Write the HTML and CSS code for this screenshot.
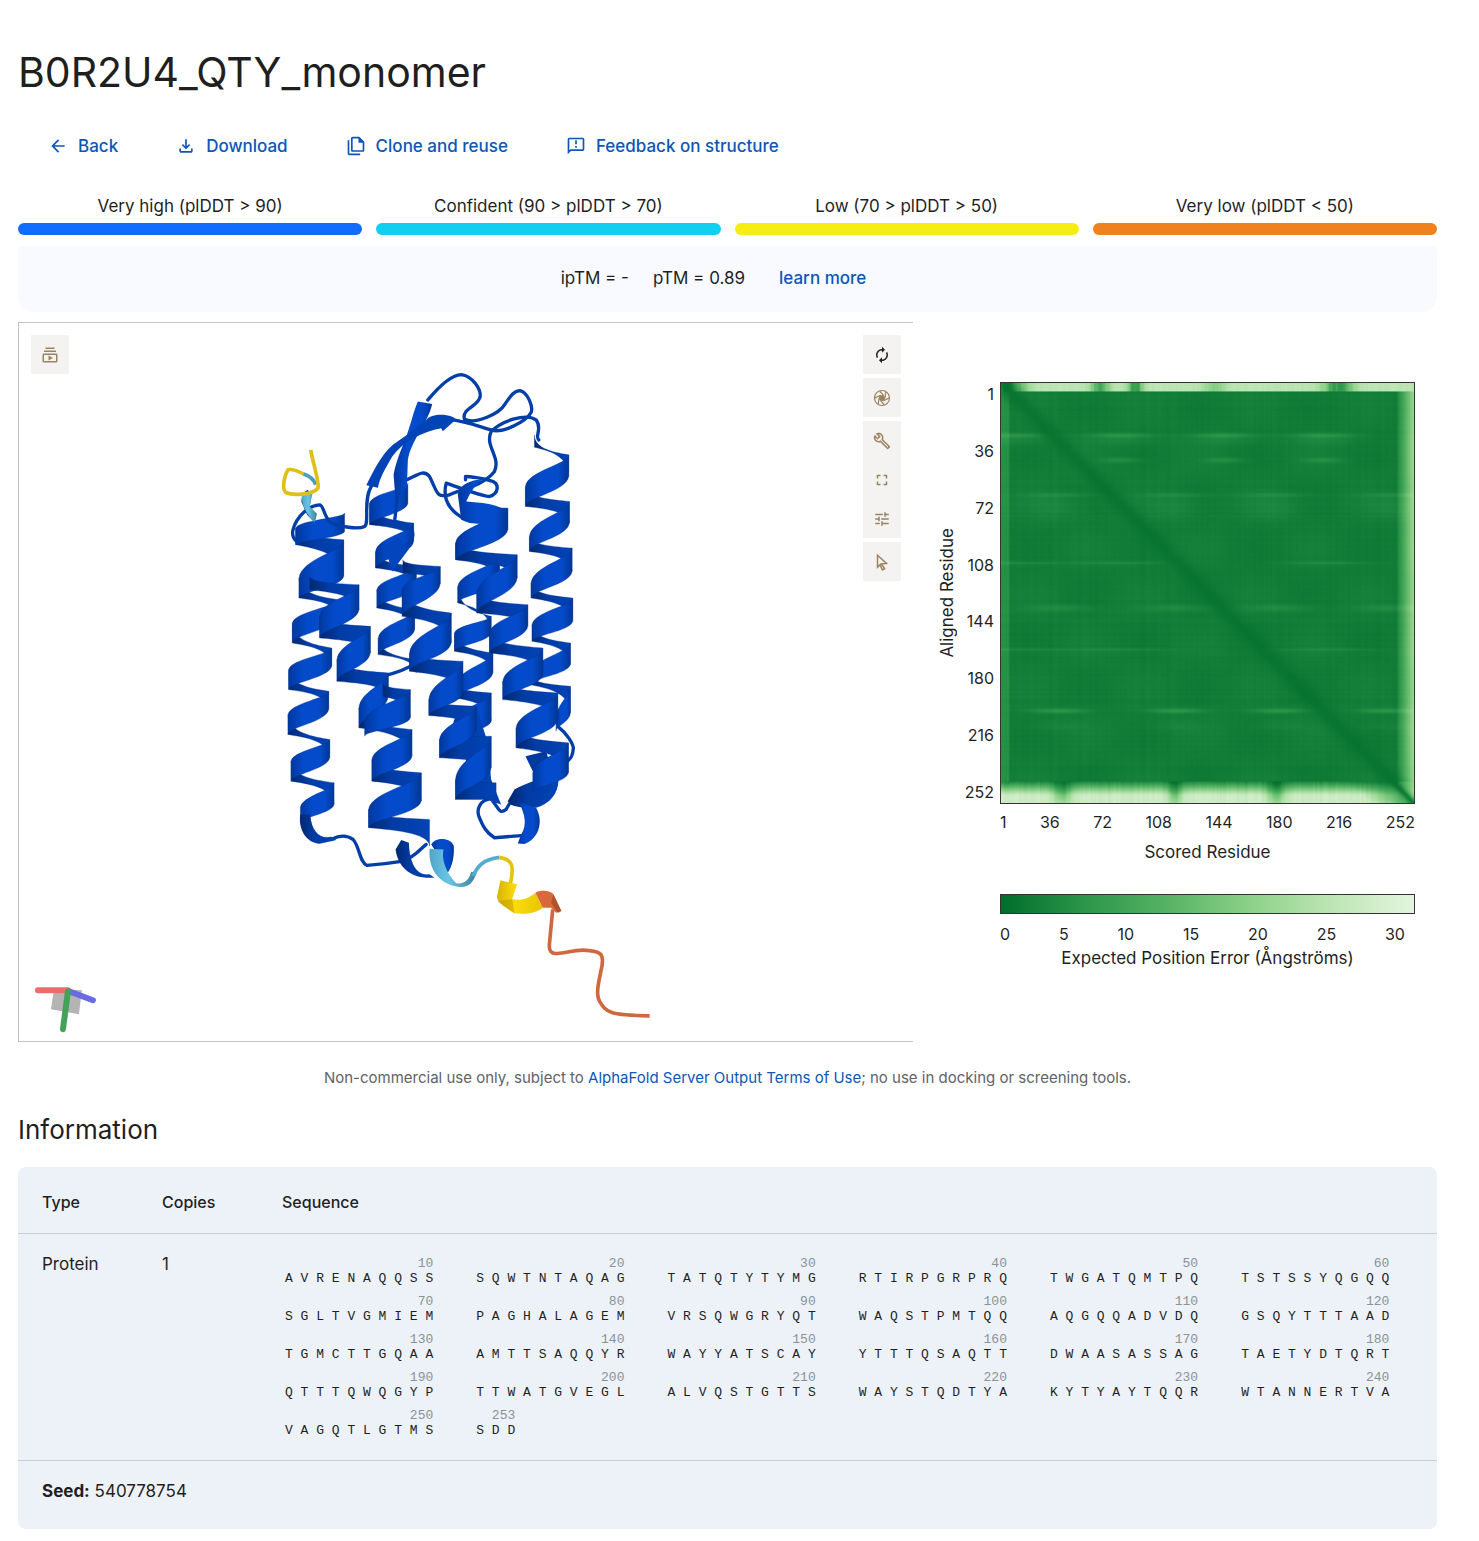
FILE: index.html
```html
<!DOCTYPE html>
<html lang="en">
<head>
<meta charset="utf-8">
<title>B0R2U4_QTY_monomer</title>
<meta name="viewport" content="width=device-width, initial-scale=1">
<link rel="stylesheet" href="styles.css">
</head>
<body>
<main class="page">
  <h1 class="title">B0R2U4_QTY_monomer</h1>

  <nav class="actions" aria-label="Job actions">
    <button class="action" type="button"><svg class="icon" viewBox="0 0 24 24"><path d="M7.8 13l5.6 5.6L12 20l-8-8 8-8 1.4 1.4L7.800 11H20v2z"/></svg>Back</button>
    <button class="action" type="button"><svg class="icon" viewBox="0 0 24 24"><path d="M12 16l-5-5 1.4-1.45 2.6 2.6V4h2v8.15l2.6-2.6L17 11zM6 20q-.8 0-1.4-.6T4 18v-3h2v3h12v-3h2v3q0 .8-.6 1.4T18 20z"/></svg>Download</button>
    <button class="action" type="button"><svg class="icon" viewBox="0 0 24 24"><path fill-rule="evenodd" d="M8 1C6.900 1 6 1.900 6 3v14c0 1.100.9 2 2 2h12c1.100 0 2-.9 2-2V7l-6-6zM8 3h7v5h5v9H8zM2 5h2v16h13v2H4c-1.100 0-2-.9-2-2z"/></svg>Clone and reuse</button>
    <button class="action" type="button"><svg class="icon" viewBox="0 0 24 24"><path d="M20 2H4c-1.1 0-2 .9-2 2v18l4-4h14c1.1 0 2-.9 2-2V4c0-1.1-.9-2-2-2zm0 14H5.2L4 17.2V4h16v12zM11 5h2v5h-2zm0 7h2v2h-2z"/></svg>Feedback on structure</button>
  </nav>

  <ul class="legend">
    <li class="legend-item">Very high (plDDT &gt; 90)<span class="bar bar-very-high"></span></li>
    <li class="legend-item">Confident (90 &gt; plDDT &gt; 70)<span class="bar bar-confident"></span></li>
    <li class="legend-item">Low (70 &gt; plDDT &gt; 50)<span class="bar bar-low"></span></li>
    <li class="legend-item">Very low (plDDT &lt; 50)<span class="bar bar-very-low"></span></li>
  </ul>

  <div class="scores">
    <span>ipTM = -</span>
    <span>pTM = 0.89</span>
    <a class="learn" href="#">learn more</a>
  </div>

  <section class="results">
    <div class="viewer">
      <svg class="structure" viewBox="0 0 895 719" role="img" aria-label="Predicted structure">
        <defs>
          <linearGradient id="front"><stop offset="0" stop-color="#01389f"/><stop offset=".35" stop-color="#034bcb"/><stop offset=".75" stop-color="#034bcb"/><stop offset="1" stop-color="#013795"/></linearGradient>
          <linearGradient id="back"><stop offset="0" stop-color="#01286f"/><stop offset=".4" stop-color="#023ca5"/><stop offset="1" stop-color="#0243b6"/></linearGradient>
          <linearGradient id="cyan"><stop offset="0" stop-color="#4fa6c8"/><stop offset=".4" stop-color="#6cc4e4"/><stop offset="1" stop-color="#3c819c"/></linearGradient>
          <linearGradient id="gold"><stop offset="0" stop-color="#d8b400"/><stop offset=".4" stop-color="#fbdb0c"/><stop offset="1" stop-color="#e8c400"/></linearGradient>
        </defs>
        <g transform="translate(251 37) scale(.33333)">
          <g id="helices-rear"></g>
          <g class="coil">
            <path d="M475 120C500 90 540 45 575 44C610 48 635 90 632 110C628 140 575 145 585 178C620 195 690 160 705 135C725 105 735 92 752 92C775 98 792 140 785 158C770 185 700 222 665 210C630 200 590 185 550 180"/>
            <path d="M808 240C795 230 820 205 800 180C770 160 700 180 665 215C645 260 695 290 675 335C640 380 570 390 540 405C500 415 505 400 480 350C460 325 440 350 400 365"/>
            <path d="M590 480C530 450 520 410 530 370C560 380 640 410 660 410C690 400 690 370 665 363C640 355 600 350 588 350V360"/>
            <path d="M305 380C280 420 300 490 285 500C265 510 210 500 185 490C160 470 165 440 150 435C120 435 80 470 70 510C65 530 75 540 85 550"/>
            <path d="M385 400L375 485C400 490 430 500 430 525C430 540 420 550 405 560"/>
            <path d="M345 948C380 940 410 930 440 910"/>
            <path d="M870 1105C890 1120 910 1150 912 1165C910 1190 905 1195 895 1205"/>
            <path d="M655 1320C635 1325 620 1345 628 1370C640 1400 650 1420 675 1435L765 1428"/>
            <path d="M670 1325C690 1350 690 1365 710 1350C720 1330 740 1300 790 1290"/>
            <path d="M185 1440C205 1430 230 1425 250 1440C270 1460 270 1510 292 1518C330 1515 370 1510 400 1505C440 1490 450 1470 470 1455"/>
          </g>
          <path fill="url(#back)" d="M92 1365C85 1410 110 1450 150 1453L200 1442L185 1432C150 1440 125 1415 122 1365Z"/>
          <path fill="url(#back)" d="M735 1290C770 1270 840 1250 865 1240C875 1290 850 1330 800 1345C750 1345 720 1340 715 1325Z"/>
          <path fill="url(#front)" d="M750 1330L800 1345C825 1390 805 1440 765 1454L745 1452L755 1425C775 1395 765 1365 750 1330Z"/>
          <path fill="url(#back)" d="M378 1470C385 1520 420 1560 495 1555L480 1545C440 1550 420 1510 418 1450L395 1442Z"/>
          <path fill="url(#front)" d="M485 1455C500 1430 545 1435 553 1460C555 1500 545 1535 525 1550L515 1500Z"/>
          <path fill="#013a9e" d="M768 1190L830 1175L850 1240L790 1235Z"/>
          <path fill="#0242b2" d="M585 1060L620 1040L655 1150L665 1260L695 1335L620 1310L590 1230Z"/>
          <g id="helices-front"></g>
          <path fill="#0245bd" d="M345 560L385 532L418 568L368 635Z"/>
          <path fill="url(#front)" d="M565 405C570 370 610 360 640 358C610 380 600 405 590 425C640 430 680 430 712 455L715 500L600 490L575 480Z"/>
          <path fill="url(#front)" d="M445 125L488 132C475 190 425 240 415 300L412 380L378 420L372 345C382 290 405 250 412 225C425 190 430 160 445 125Z"/>
          <path fill="#0243b6" d="M470 180C485 160 540 160 560 178L520 214L515 205C460 215 400 245 368 290C345 330 330 355 325 384L290 376C310 340 330 290 370 255C410 225 450 200 470 180Z"/>
          <path fill="url(#back)" d="M115 390L125 410L120 440L140 465L135 488L112 465L95 425L98 400Z"/>
          <path fill="url(#cyan)" d="M98 405L130 395L120 440L142 462L135 488C115 470 90 430 98 405Z"/>
          <path class="tube" stroke="#4b9dbd" d="M100 342C125 350 135 365 138 375"/>
          <path class="tube" stroke="#dfc018" d="M123 270C130 310 150 370 145 385C130 405 70 408 48 398C35 385 45 345 55 330C70 325 85 335 102 342"/>
          <path fill="url(#cyan)" d="M480 1468L522 1470C515 1500 530 1540 560 1572C590 1575 600 1555 605 1537L622 1540C610 1570 600 1582 575 1583C520 1580 475 1540 480 1468Z"/>
          <path class="tube" stroke="#54acce" d="M610 1550C625 1520 640 1500 690 1494"/>
          <path class="tube" stroke="#e6c40c" d="M690 1494C730 1500 735 1520 722 1575"/>
          <path fill="url(#gold)" d="M693 1563L743 1575L728 1620C760 1625 780 1615 798 1600L820 1645C795 1665 760 1665 735 1662C700 1640 680 1625 683 1610Z"/>
          <path fill="#b99500" d="M728 1620L735 1662L683 1625Z" opacity=".45"/>
          <path fill="#d9683b" d="M798 1600C815 1590 845 1595 852 1605L876 1655L860 1660L845 1645L820 1645Z"/>
          <path fill="#9f4729" d="M852 1605L876 1655L866 1661L845 1630Z" opacity=".7"/>
          <path class="tube" stroke="#d0683f" d="M850 1650L840 1755C838 1780 850 1785 870 1782C900 1780 920 1768 960 1774C1000 1778 1002 1790 998 1820C985 1880 980 1905 990 1925C1010 1960 1020 1968 1141 1970"/>
        </g>
        <g class="axes">
          <path class="axes-plane" d="M35 667L63 668L60 692L32 687Z"/>
          <path stroke="#ef6b6b" d="M19 668L49 668"/>
          <path stroke="#6a6ae8" d="M50 669L74 678"/>
          <path stroke="#43a15a" d="M49 669L44 707"/>
        </g>
      </svg>

      <div class="tools tools-left">
        <div class="tool-set"><button class="tool" type="button" aria-label="Animate"><svg class="glyph" viewBox="0 0 24 24"><path d="M4 6h16v2H4zm2-4h12v2H6zm14 8H4c-1.1 0-2 .9-2 2v8c0 1.1.9 2 2 2h16c1.1 0 2-.9 2-2v-8c0-1.1-.9-2-2-2zm0 10H4v-8h16v8zm-10-7.3v6.6L16 16z"/></svg></button></div>
      </div>
      <div class="tools tools-right">
        <div class="tool-set"><button class="tool tool-active" type="button" aria-label="Reset zoom"><svg class="glyph" viewBox="0 0 24 24"><path d="M12 6v3l4-4-4-4v3c-4.42 0-8 3.58-8 8 0 1.57.46 3.03 1.24 4.26L6.7 14.8A5.87 5.87 0 0 1 6 12c0-3.31 2.69-6 6-6zm6.76 1.74L17.3 9.2c.44.84.7 1.79.7 2.8 0 3.31-2.69 6-6 6v-3l-4 4 4 4v-3c4.42 0 8-3.58 8-8 0-1.57-.46-3.03-1.24-4.26z"/></svg></button></div>
        <div class="tool-set"><button class="tool" type="button" aria-label="Screenshot"><svg class="glyph" viewBox="0 0 24 24"><g fill="none" stroke="currentColor" stroke-width="1.6"><circle cx="12" cy="12" r="10"/><path d="M14 8.5L9 3M16 12l1-8M14 15.500l7.500-3.500M10 15.500L15 21M8 12l-1 8M10 8.500L2.500 12"/></g><circle cx="12" cy="12" r="4"/></svg></button></div>
        <div class="tool-set">
          <button class="tool" type="button" aria-label="Toggle controls"><svg class="glyph" viewBox="0 0 24 24"><path d="M22.61 19l-9.08-9.09c.93-2.34.45-5.1-1.44-7C9.79.61 6.21.4 3.66 2.26L7.5 6.11 6.08 7.52 2.25 3.69C.39 6.23.6 9.82 2.9 12.11c1.86 1.86 4.57 2.35 6.89 1.48l9.11 9.11c.39.39 1.02.39 1.41 0l2.3-2.3c.4-.38.4-1.01 0-1.4zm-3 1.6l-9.46-9.47c-.61.45-1.29.72-2 .82-1.36.2-2.79-.21-3.83-1.25C3.37 9.76 2.93 8.5 3 7.26l3.09 3.09 4.24-4.24-3.09-3.09c1.24-.07 2.49.37 3.44 1.31 1.08 1.08 1.49 2.57 1.24 3.96-.12.71-.42 1.37-.88 1.96l9.45 9.45z"/></svg></button>
          <button class="tool" type="button" aria-label="Fullscreen"><svg class="glyph" viewBox="0 0 24 24"><path d="M7 14H5v5h5v-2H7zm-2-4h2V7h3V5H5zm12 7h-3v2h5v-5h-2zM14 5v2h3v3h2V5z"/></svg></button>
          <button class="tool" type="button" aria-label="Settings"><svg class="glyph" viewBox="0 0 24 24"><path d="M3 17v2h6v-2H3zM3 5v2h10V5H3zm10 16v-2h8v-2h-8v-2h-2v6h2zM7 9v2H3v2h4v2h2V9H7zm14 4v-2H11v2h10zm-6-4h2V7h4V5h-4V3h-2v6z"/></svg></button>
        </div>
        <div class="tool-set"><button class="tool" type="button" aria-label="Selection mode"><svg class="glyph" viewBox="0 0 24 24"><path fill="none" stroke="currentColor" stroke-width="2" d="M6 3l12 11-6.500.5 4 6.500-3 1.500-3-7L6 19z"/></svg></button></div>
      </div>
    </div>

    <div class="pae">
      <div class="plot">
        <div class="y-title"><span class="y-text">Aligned Residue</span></div>
        <div class="y-ticks"><span>1</span><span>36</span><span>72</span><span>108</span><span>144</span><span>180</span><span>216</span><span>252</span></div>
        <canvas class="heat" id="heat" width="253" height="253"></canvas>
        <div class="x-ticks"><span>1</span><span>36</span><span>72</span><span>108</span><span>144</span><span>180</span><span>216</span><span>252</span></div>
        <div class="x-title">Scored Residue</div>
        <div class="scale"></div>
        <div class="scale-ticks"><span>0</span><span>5</span><span>10</span><span>15</span><span>20</span><span>25</span><span>30</span></div>
        <div class="scale-title">Expected Position Error (Ångströms)</div>
      </div>
    </div>
  </section>

  <p class="terms">Non-commercial use only, subject to <a href="#">AlphaFold Server Output Terms of Use</a>; no use in docking or screening tools.</p>

  <h2 class="subtitle">Information</h2>
  <div class="card">
    <table class="info">
      <thead><tr><th class="narrow">Type</th><th class="narrow">Copies</th><th>Sequence</th></tr></thead>
      <tbody><tr>
        <td>Protein</td><td>1</td>
        <td><div class="sequence">
          <div class="block"><span class="pos">10</span>A V R E N A Q Q S S</div>
          <div class="block"><span class="pos">20</span>S Q W T N T A Q A G</div>
          <div class="block"><span class="pos">30</span>T A T Q T Y T Y M G</div>
          <div class="block"><span class="pos">40</span>R T I R P G R P R Q</div>
          <div class="block"><span class="pos">50</span>T W G A T Q M T P Q</div>
          <div class="block"><span class="pos">60</span>T S T S S Y Q G Q Q</div>
          <div class="block"><span class="pos">70</span>S G L T V G M I E M</div>
          <div class="block"><span class="pos">80</span>P A G H A L A G E M</div>
          <div class="block"><span class="pos">90</span>V R S Q W G R Y Q T</div>
          <div class="block"><span class="pos">100</span>W A Q S T P M T Q Q</div>
          <div class="block"><span class="pos">110</span>A Q G Q Q A D V D Q</div>
          <div class="block"><span class="pos">120</span>G S Q Y T T T A A D</div>
          <div class="block"><span class="pos">130</span>T G M C T T G Q A A</div>
          <div class="block"><span class="pos">140</span>A M T T S A Q Q Y R</div>
          <div class="block"><span class="pos">150</span>W A Y Y A T S C A Y</div>
          <div class="block"><span class="pos">160</span>Y T T T Q S A Q T T</div>
          <div class="block"><span class="pos">170</span>D W A A S A S S A G</div>
          <div class="block"><span class="pos">180</span>T A E T Y D T Q R T</div>
          <div class="block"><span class="pos">190</span>Q T T T Q W Q G Y P</div>
          <div class="block"><span class="pos">200</span>T T W A T G V E G L</div>
          <div class="block"><span class="pos">210</span>A L V Q S T G T T S</div>
          <div class="block"><span class="pos">220</span>W A Y S T Q D T Y A</div>
          <div class="block"><span class="pos">230</span>K Y T Y A Y T Q Q R</div>
          <div class="block"><span class="pos">240</span>W T A N N E R T V A</div>
          <div class="block"><span class="pos">250</span>V A G Q T L G T M S</div>
          <div class="block"><span class="pos">253</span>S D D</div>
        </div></td>
      </tr></tbody>
    </table>
    <div class="seed"><strong>Seed:</strong> 540778754</div>
  </div>
</main>
<script src="plots.js"></script>
</body>
</html>
```
FILE: styles.css
```css
* { box-sizing: border-box; }
body {
  margin: 0;
  background: #fff;
  color: #1f1f1f;
  font: 400 17px/24px Inter, "Open Sans", sans-serif;
}
a { color: #0b57b8; text-decoration: none; }
button { border: 0; background: none; font: inherit; color: inherit; cursor: pointer; }
.page { padding: 36px 42px 12px 18px; }

.title { margin: 0; font-size: 41px; line-height: 72px; font-weight: 400; }
.actions { display: flex; gap: 58px; margin-top: 18px; padding-left: 30px; }
.action { display: flex; align-items: center; gap: 10px; height: 40px; padding: 0; color: #0b57b8; font-weight: 500; }
.icon { width: 20px; height: 20px; fill: currentColor; }

.legend { display: grid; grid-template-columns: repeat(4, 1fr); gap: 14px; margin: 28px 0 0; padding: 0; list-style: none; text-align: center; }
.legend-item { display: flex; flex-direction: column; gap: 5px; }
.bar { height: 12px; border-radius: 6px; }
.bar-very-high { background: #106dff; }
.bar-confident { background: #10cff1; }
.bar-low { background: #f6ed12; }
.bar-very-low { background: #ef821e; }

.scores { display: flex; justify-content: center; gap: 24px; margin-top: 11px; padding: 20px 28px 22px 0; background: #f8faff; border-radius: 4px 4px 16px 16px; }
.learn { margin-left: 10px; font-weight: 500; }

.results { display: grid; grid-template-columns: 895fr 524fr; margin-top: 10px; }
.viewer { position: relative; border: 1px solid #c4c4c4; border-right: 0; }
.structure { display: block; width: 100%; }
.ribbon { stroke: #01308a; stroke-width: 1; stroke-linejoin: round; }
.coil path { fill: none; stroke: #023ea8; stroke-width: 10; stroke-linecap: round; stroke-linejoin: round; }
.tube { fill: none; stroke-width: 11; stroke-linejoin: round; }
.axes { fill: none; stroke-width: 6; stroke-linecap: round; }
.axes-plane { fill: #b4b4b4; }
.tools { position: absolute; top: 12px; display: flex; flex-direction: column; gap: 4px; }
.tools-left { left: 12px; }
.tools-right { right: 12px; }
.tool-set { display: flex; flex-direction: column; background: #f4f3f1; }
.tool { display: grid; place-items: center; width: 38px; height: 39px; padding: 0; color: #9c835f; }
.tool-active { color: #222; }
.glyph { width: 18px; height: 18px; fill: currentColor; }

.pae { padding: 60px 22px 0; }
.plot { display: grid; grid-template-columns: 20px 45px 1fr; }
.plot > * { grid-column: 3; }
.plot > .y-title { grid-area: 1 / 1; display: grid; place-items: center; }
.y-text { writing-mode: vertical-rl; transform: rotate(180deg); }
.plot > .y-ticks { grid-area: 1 / 2; display: flex; flex-direction: column; justify-content: space-between; align-items: flex-end; padding-right: 6px; font-size: 16px; }
.plot > .heat { grid-area: 1 / 3; display: block; width: 100%; aspect-ratio: 415 / 422; border: 1px solid #333; }
.x-title, .scale-title { text-align: center; }
.x-ticks { display: flex; justify-content: space-between; margin-top: 6px; font-size: 16px; }
.x-title { margin-top: 6px; }
.scale { height: 20px; margin-top: 30px; border: 1px solid #333; background: linear-gradient(90deg, #006d2c, #2b9549 20%, #56b264 40%, #8cd188 60%, #bde5b4 80%, #e5f5e0); }
.scale-ticks { display: flex; justify-content: space-between; margin-top: 8px; padding-right: 10px; font-size: 16px; }

.terms { margin: 24px 0 0; font-size: 15px; text-align: center; color: #5f6368; }
.subtitle { margin: 22px 0 0; font-size: 26px; line-height: 36px; font-weight: 400; }
.card { margin-top: 19px; border-radius: 8px; background: #edf2f9; }
.info { width: 100%; border-collapse: collapse; table-layout: fixed; text-align: left; }
.info th { height: 66px; padding: 4px 0 0 24px; font-size: 16px; font-weight: 500; border-bottom: 1px solid #c9ced6; }
.info .narrow { width: 120px; }
.info td { padding: 18px 0 22px 24px; vertical-align: top; border-bottom: 1px solid #c9ced6; }
.sequence { display: flex; flex-wrap: wrap; gap: 8px 43px; padding: 4px 0 0 3px; font: 13px/15px "Liberation Mono", monospace; }
.block { white-space: nowrap; }
.pos { display: block; text-align: right; color: #8c9197; }
.seed { padding: 18px 24px 26px; }
```
FILE: plots.js
```js
// Ribbon helices. Each node is a turning point: [x, top, bottom].
const rearHelices = [
  [[225,460,515],[78,505,555],[222,540,650],[88,655,715],[205,720,770],[68,790,850],[186,865,920],[57,930,990],[177,995,1050],[55,1065,1125],[180,1140,1195],[64,1205,1265],[193,1270,1335],[92,1345,1390]],
  [[415,370,430],[300,430,495],[432,490,545],[318,575,625],[440,620,680],[322,690,745],[435,750,810],[326,835,885],[440,900,940]],
  [[795,225,262],[898,285,350],[768,380,440],[900,425,490],[780,530,575],[908,565,635],[785,670,715],[910,715,785],[788,795,845],[903,850,915],[780,945,975],[903,980,1060],[860,1080,1115]],
  [[712,445,510],[558,550,600],[690,590,660],[565,680,730],[665,770,820],[555,820,875],[670,880,940],[560,975,1015],[665,1000,1085],[552,1090,1140]]
];
const frontHelices = [
  [[120,650,690],[268,675,750],[150,770,835],[302,800,880],[202,900,965],[356,940,1010],[268,1045,1105],[427,1110,1190],[307,1200,1265],[455,1240,1325],[297,1350,1405],[480,1380,1460]],
  [[340,970,1010],[422,990,1075],[285,1085,1130]],
  [[400,600,640],[512,620,672],[398,690,770],[545,760,850],[420,880,935],[580,905,1000],[478,1020,1068],[620,1040,1110],[510,1140,1195],[665,1130,1225],[558,1260,1320],[680,1270,1320]],
  [[590,425,480],[715,445,510],[562,550,600],[743,585,655],[622,700,760],[775,735,800],[660,820,880],[820,865,945],[700,965,1020],[865,1000,1080],[740,1105,1165],[897,1150,1240],[790,1240,1300]]
];

// The near side of a turn is a full band; the far side slims towards its middle.
function segment(a, b) {
  const far = b[0] > a[0];
  const early = far ? 0.75 : 0.3;
  const late = far ? 0.1 : 0.5;
  const lead = (b[0] - a[0]) * (far ? 0.35 : 0.05);
  const top = b[1] - a[1];
  const bottom = b[2] - a[2];
  const path = document.createElementNS("http://www.w3.org/2000/svg", "path");
  path.setAttribute("class", "ribbon");
  path.setAttribute("d",
    `M${a[0]} ${a[1]}C${a[0]} ${a[1] + top * early} ${b[0] - lead} ${b[1] - top * late} ${b[0]} ${b[1]}` +
    `L${b[0]} ${b[2]}C${b[0]} ${b[2] - bottom * early} ${a[0] + lead} ${a[2] + bottom * late} ${a[0]} ${a[2]}Z`);
  path.setAttribute("fill", far ? "url(#back)" : "url(#front)");
  return path;
}

function drawHelices(id, helices) {
  const group = document.getElementById(id);
  for (const nodes of helices) {
    const parts = nodes.slice(1).map((n, i) => [nodes[i], n]);
    parts.filter(([a, b]) => b[0] > a[0]).forEach(p => group.append(segment(...p)));
    parts.filter(([a, b]) => b[0] <= a[0]).forEach(p => group.append(segment(...p)));
  }
}
drawHelices("helices-rear", rearHelices);
drawHelices("helices-front", frontHelices);

// Predicted aligned error, 253 x 253 residues.
const N = 253;
const stops = [[0,109,44],[43,149,73],[86,178,100],[140,209,136],[189,229,180],[229,245,224]];
const bell = (x, c, s) => Math.exp(-((x - c) ** 2) / (2 * s * s));
const noise = n => { const v = Math.sin(n * 127.1) * 43758.5453; return v - Math.floor(v); };
// [row, row spread, strength, column spread, columns]
const streaks = [
  [31, 1, 3.6, 14, [8, 73, 136, 197]], [34, 2, 1.4, 14, [8, 73, 136, 197]],
  [46, 1, 3, 9, [73, 136, 197]], [67, 1, 2, 14, [34, 107, 167, 240]],
  [75, 5, 1.4, 12, [34, 107, 167, 240]], [108, 0.6, 2.4, 20, [10, 73, 200]],
  [135, 1.4, 2.4, 16, [35, 107, 170, 238]], [160, 0.6, 2, 22, [10, 73, 200]],
  [197, 1, 4.4, 12, [35, 107, 170, 235]], [206, 2, 1, 12, [35, 107, 170, 235]]
];

function error(i, j) {
  let v = 2.1 + 0.5 * noise(i + 7) + 0.5 * noise(j + 400);
  v += 0.5 * Math.sin(i / 9) * Math.sin(j / 11);
  for (const [row, rs, amp, cs, cols] of streaks) {
    for (const c of cols) v += amp * bell(i, row, rs) * bell(j, c, cs);
  }
  if (j < 5) v += 3;
  if (j > 242) v += 2.5 + (j - 243) * 1.7;
  if (i < 5) {
    const dip = Math.max(bell(j, 3, 7), bell(j, 60, 4) * 0.6, bell(j, 82, 3) * 0.8, bell(j, 206, 6) * 0.8, bell(j, 130, 5) * 0.3);
    v = 26 - 19 * dip - 7 * noise(j) * (0.2 + dip);
  }
  if (i > 239 && i >= j) {
    const dip = Math.max(bell(j, 37, 4), bell(j, 106, 3), bell(j, 168, 4)) * (1 - (i - 240) / 18);
    v = Math.min(29, 6 + (i - 240) * 3) * (1 - 0.75 * dip) - 2 * noise(j);
    v *= Math.min(1, 0.3 + (i - j) / 40);
  }
  const near = 0.85 * bell(i, j, i > 239 ? 2 : 5);
  return Math.max(0.6, v * (1 - near) + near);
}

const ctx = document.getElementById("heat").getContext("2d");
const image = ctx.createImageData(N, N);
for (let i = 0; i < N; i++) {
  for (let j = 0; j < N; j++) {
    const t = Math.min(4.999, error(i, j) / 31.75 * 5);
    const k = Math.floor(t);
    for (let c = 0; c < 3; c++) {
      image.data[(i * N + j) * 4 + c] = stops[k][c] + (stops[k + 1][c] - stops[k][c]) * (t - k);
    }
    image.data[(i * N + j) * 4 + 3] = 255;
  }
}
ctx.putImageData(image, 0, 0);
```
